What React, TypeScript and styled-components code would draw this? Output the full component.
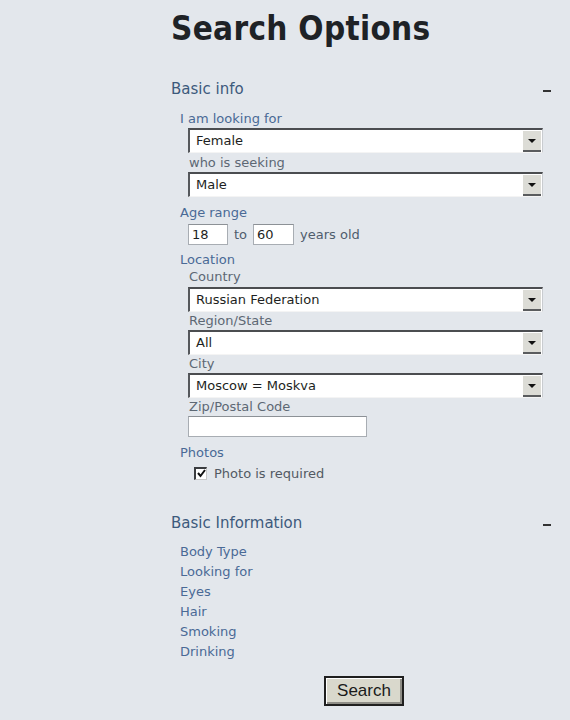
import React from 'react'
import styled, { createGlobalStyle } from 'styled-components'

const GlobalStyle = createGlobalStyle`
  html, body {
    margin: 0;
    padding: 0;
    background: #e3e7ec;
  }
  body {
    font-family: "DejaVu Sans", Verdana, sans-serif;
  }
`

const Page = styled.div`
  width: 570px;
  height: 720px;
  overflow: hidden;
  background: #e3e7ec;
`

const Column = styled.div`
  margin-left: 171px;
  width: 380px;
  display: flex;
  flex-direction: column;
`

const Title = styled.h1`
  margin: 10px 0 0 0;
  font-family: "DejaVu Sans Condensed", "DejaVu Sans", sans-serif;
  font-weight: bold;
  font-size: 33px;
  letter-spacing: 0.3px;
  line-height: 38px;
  color: #1e2226;
`

const SectionHead = styled.div<{ $top: number }>`
  display: flex;
  justify-content: space-between;
  align-items: center;
  margin-top: ${p => p.$top}px;
  height: 22px;
  font-size: 15px;
  color: #3d5a7c;
`

const Minus = styled.span`
  width: 8px;
  height: 2px;
  margin-top: 3px;
  background: #333;
`

const Block = styled.div<{ $indent: number, $top?: number }>`
  padding-left: ${p => p.$indent}px;
  margin-top: ${p => p.$top ?? 0}px;
  display: flex;
  flex-direction: column;
`

const Label = styled.div<{ $tone?: 'blue' | 'gray', $top?: number, $indent?: number }>`
  font-size: 13px;
  line-height: 16px;
  height: 16px;
  margin-top: ${p => p.$top ?? 0}px;
  padding-left: ${p => p.$indent ?? 0}px;
  color: ${p => (p.$tone === 'gray' ? '#5d6874' : '#4a6a96')};
`

const SelectBox = styled.div<{ $top: number }>`
  display: flex;
  align-items: stretch;
  height: 25px;
  margin: ${p => p.$top}px 0 0 8px;
  width: 355px;
  box-sizing: border-box;
  background: #fff;
  border-top: 2px solid #4b4d50;
  border-left: 2px solid #55585c;
  border-right: 1px solid #c9ccd0;
  border-bottom: 1px solid #f4f4f4;
`

const SelectValue = styled.span`
  flex: 1;
  font-size: 13px;
  line-height: 22px;
  padding-left: 6px;
  color: #1d1f22;
`

const ArrowButton = styled.span`
  width: 18px;
  margin: 1px 1px 0 0;
  background: #dcdcd6;
  border-bottom: 2px solid #5a5c5e;
  display: flex;
  align-items: center;
  justify-content: center;
`

const Arrow = styled.span`
  width: 0;
  height: 0;
  border-left: 4px solid transparent;
  border-right: 4px solid transparent;
  border-top: 4px solid #111;
`

const Row = styled.div<{ $top: number }>`
  display: flex;
  align-items: center;
  margin: ${p => p.$top}px 0 0 8px;
  gap: 6px;
  font-size: 13px;
  color: #4f5d6c;
`

const TextBox = styled.div<{ $w: number }>`
  width: ${p => p.$w}px;
  height: 21px;
  box-sizing: border-box;
  background: #fff;
  border: 1px solid #a8adb3;
  border-top-color: #8c9196;
  font-size: 13px;
  line-height: 19px;
  padding-left: 3px;
  color: #1d1f22;
`

const CheckRow = styled.label`
  display: flex;
  align-items: center;
  height: 16px;
  gap: 7px;
  margin-left: 14px;
  margin-top: 4px;
  font-size: 13px;
  color: #525a63;
`

const CheckBox = styled.span`
  width: 13px;
  height: 13px;
  box-sizing: border-box;
  background: #fff;
  border-top: 2px solid #3b3d40;
  border-left: 2px solid #3b3d40;
  border-right: 1px solid #c8c8c8;
  border-bottom: 1px solid #c8c8c8;
  display: flex;
  align-items: center;
  justify-content: center;
`

const ListItem = styled.div`
  font-size: 13px;
  line-height: 20px;
  color: #4a6a96;
`

const ButtonRow = styled.div`
  display: flex;
  justify-content: center;
  margin-top: 14px;
  padding-left: 6px;
`

const Button = styled.button`
  width: 80px;
  height: 30px;
  box-sizing: border-box;
  font-family: "Liberation Sans", Arial, sans-serif;
  font-size: 17px;
  color: #1a1a1a;
  background: #d9d8cc;
  border: 2px solid #1f1f1f;
  box-shadow: inset 1px 1px 0 #fff, inset -2px -2px 0 #8e8d86;
  padding: 0;
`

const Select: React.FC<{ value: string, top: number }> = ({ value, top }) => (
  <SelectBox $top={top}>
    <SelectValue>{value}</SelectValue>
    <ArrowButton><Arrow /></ArrowButton>
  </SelectBox>
)

const App: React.FC = () => {
  return (
    <Page>
      <GlobalStyle />
      <Column>
        <Title>Search Options</Title>

        <SectionHead $top={30}>
          <span>Basic info</span>
          <Minus />
        </SectionHead>

        <Block $indent={9}>
          <Label $top={11}>I am looking for</Label>
          <Select value='Female' top={1} />
          <Label $tone='gray' $top={2} $indent={9}>who is seeking</Label>
          <Select value='Male' top={1} />

          <Label $top={8}>Age range</Label>
          <Row $top={3}>
            <TextBox $w={40}>18</TextBox>
            <span>to</span>
            <TextBox $w={41}>60</TextBox>
            <span>years old</span>
          </Row>

          <Label $top={7}>Location</Label>
          <Label $tone='gray' $top={1} $indent={9}>Country</Label>
          <Select value='Russian Federation' top={2} />
          <Label $tone='gray' $top={1} $indent={9}>Region/State</Label>
          <Select value='All' top={1} />
          <Label $tone='gray' $top={1} $indent={9}>City</Label>
          <Select value='Moscow = Moskva' top={1} />
          <Label $tone='gray' $top={1} $indent={9}>Zip/Postal Code</Label>
          <Row $top={1}>
            <TextBox $w={179} />
          </Row>

          <Label $top={8}>Photos</Label>
          <CheckRow>
            <CheckBox>
              <svg width='9' height='9' viewBox='0 0 9 9'>
                <path d='M1 4 L3.5 7 L8 1' fill='none' stroke='#111' strokeWidth='2' />
              </svg>
            </CheckBox>
            Photo is required
          </CheckRow>
        </Block>

        <SectionHead $top={31}>
          <span>Basic Information</span>
          <Minus />
        </SectionHead>

        <Block $indent={9} $top={8}>
          {['Body Type', 'Looking for', 'Eyes', 'Hair', 'Smoking', 'Drinking'].map(item => (
            <ListItem key={item}>{item}</ListItem>
          ))}
        </Block>

        <ButtonRow>
          <Button>Search</Button>
        </ButtonRow>
      </Column>
    </Page>
  )
}

export default App
